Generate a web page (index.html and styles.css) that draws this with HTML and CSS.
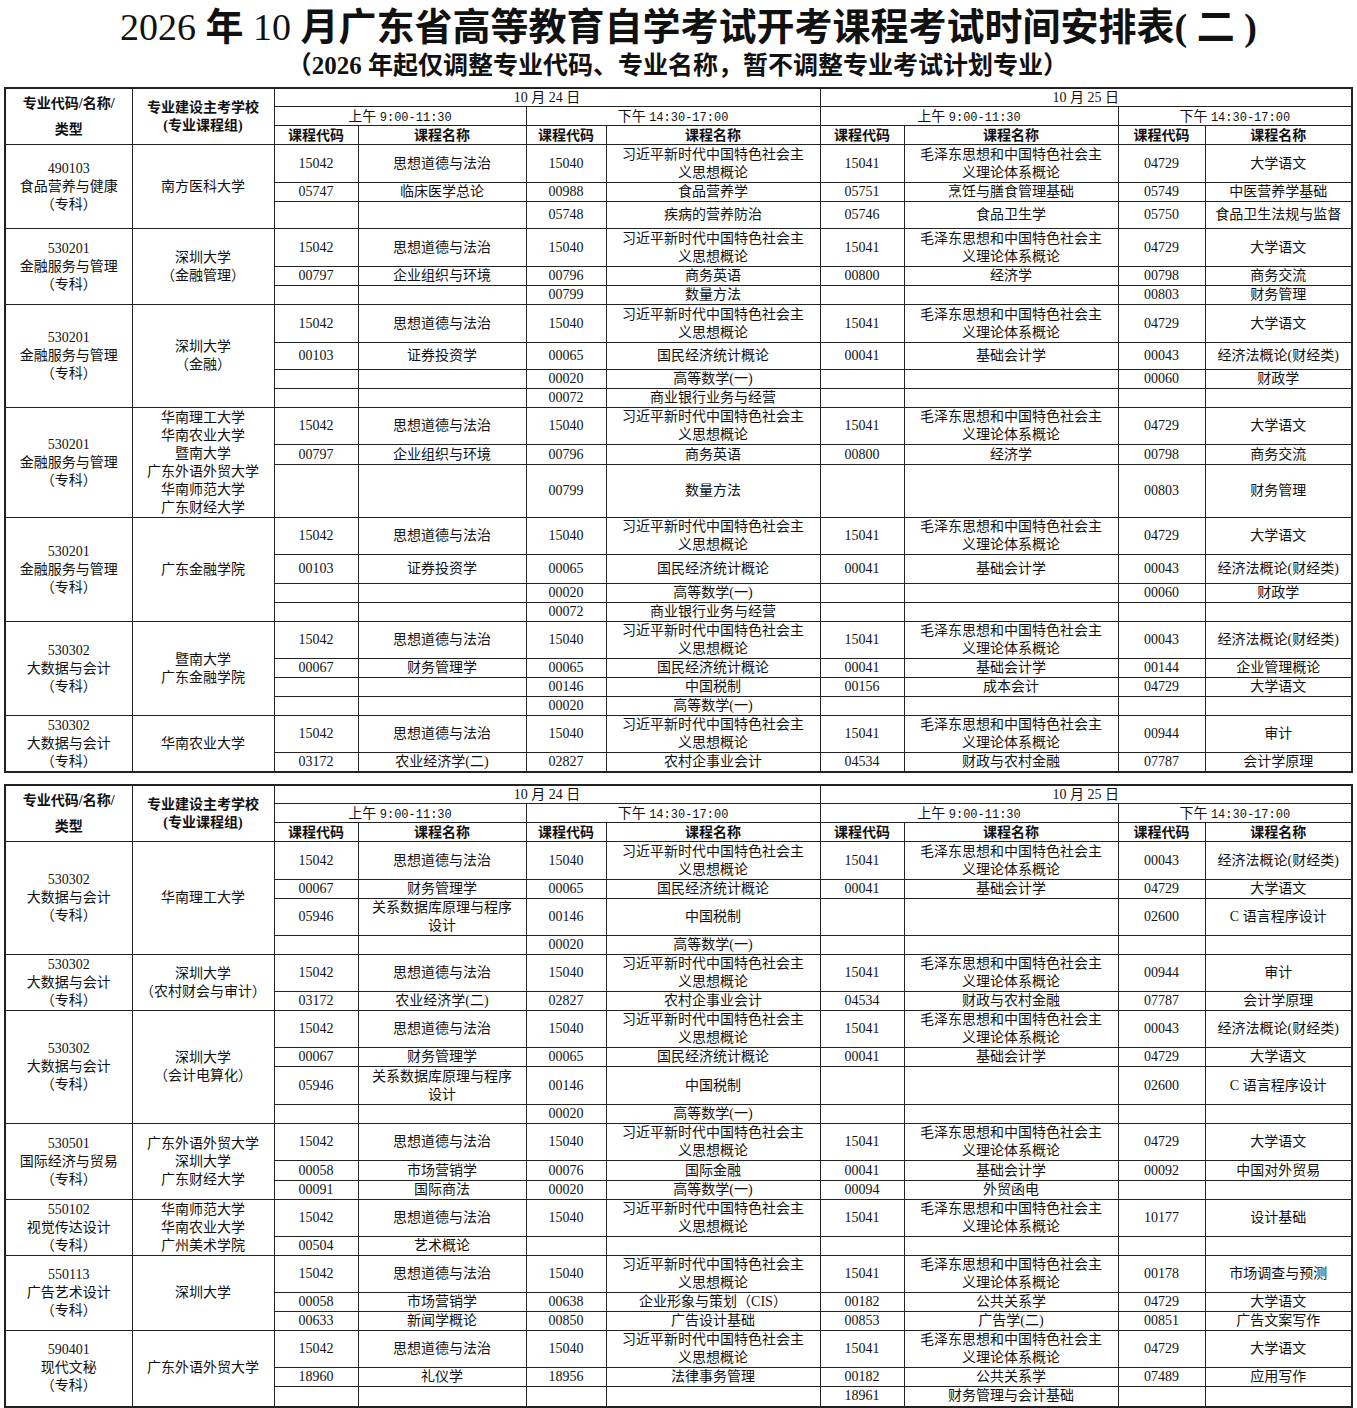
FILE: index.html
```html
<!DOCTYPE html>
<html lang="zh-CN">
<head>
<meta charset="utf-8">
<title>2026年10月广东省高等教育自学考试开考课程考试时间安排表(二)</title>
<link rel="stylesheet" href="styles.css">
</head>
<body>
<div class="page">
<h1 class="title"><span class="num">2026</span> 年 <span class="num">10</span> 月广东省高等教育自学考试开考课程考试时间安排表( 二 )</h1>
<div class="subtitle">（2026 年起仅调整专业代码、专业名称，暂不调整专业考试计划专业）</div>

<table class="sched">
<colgroup><col class="c1"><col class="c2"><col class="c3"><col class="c4"><col class="c5"><col class="c6"><col class="c7"><col class="c8"><col class="c9"><col class="c10"></colgroup>
<thead>
<tr class="h18"><td rowspan="3" class="hd hd1">专业代码/名称/<br>类型</td><td rowspan="3" class="hd hd2">专业建设主考学校<br>(专业课程组)</td><td colspan="4">10 月 24 日</td><td colspan="4">10 月 25 日</td></tr>
<tr class="h19"><td colspan="2">上午 <span class="tm">9:00-11:30</span></td><td colspan="2">下午 <span class="tm">14:30-17:00</span></td><td colspan="2">上午 <span class="tm">9:00-11:30</span></td><td colspan="2">下午 <span class="tm">14:30-17:00</span></td></tr>
<tr class="h19"><td class="hd">课程代码</td><td class="hd">课程名称</td><td class="hd">课程代码</td><td class="hd">课程名称</td><td class="hd">课程代码</td><td class="hd">课程名称</td><td class="hd">课程代码</td><td class="hd">课程名称</td></tr>
</thead>
<tbody>
<tr class="h38"><td rowspan="3">490103<br>食品营养与健康<br>（专科）</td><td rowspan="3">南方医科大学</td><td>15042</td><td>思想道德与法治</td><td>15040</td><td>习近平新时代中国特色社会主<br>义思想概论</td><td>15041</td><td>毛泽东思想和中国特色社会主<br>义理论体系概论</td><td>04729</td><td>大学语文</td></tr>
<tr class="h19"><td>05747</td><td>临床医学总论</td><td>00988</td><td>食品营养学</td><td>05751</td><td>烹饪与膳食管理基础</td><td>05749</td><td>中医营养学基础</td></tr>
<tr class="h27"><td></td><td></td><td>05748</td><td>疾病的营养防治</td><td>05746</td><td>食品卫生学</td><td>05750</td><td>食品卫生法规与监督</td></tr>

<tr class="h38"><td rowspan="3">530201<br>金融服务与管理<br>（专科）</td><td rowspan="3">深圳大学<br>（金融管理）</td><td>15042</td><td>思想道德与法治</td><td>15040</td><td>习近平新时代中国特色社会主<br>义思想概论</td><td>15041</td><td>毛泽东思想和中国特色社会主<br>义理论体系概论</td><td>04729</td><td>大学语文</td></tr>
<tr class="h19"><td>00797</td><td>企业组织与环境</td><td>00796</td><td>商务英语</td><td>00800</td><td>经济学</td><td>00798</td><td>商务交流</td></tr>
<tr class="h19"><td></td><td></td><td>00799</td><td>数量方法</td><td></td><td></td><td>00803</td><td>财务管理</td></tr>

<tr class="h38"><td rowspan="4">530201<br>金融服务与管理<br>（专科）</td><td rowspan="4">深圳大学<br>（金融）</td><td>15042</td><td>思想道德与法治</td><td>15040</td><td>习近平新时代中国特色社会主<br>义思想概论</td><td>15041</td><td>毛泽东思想和中国特色社会主<br>义理论体系概论</td><td>04729</td><td>大学语文</td></tr>
<tr class="h27"><td>00103</td><td>证券投资学</td><td>00065</td><td>国民经济统计概论</td><td>00041</td><td>基础会计学</td><td>00043</td><td>经济法概论(财经类)</td></tr>
<tr class="h19"><td></td><td></td><td>00020</td><td>高等数学(一)</td><td></td><td></td><td>00060</td><td>财政学</td></tr>
<tr class="h19"><td></td><td></td><td>00072</td><td>商业银行业务与经营</td><td></td><td></td><td></td><td></td></tr>

<tr class="h37"><td rowspan="3">530201<br>金融服务与管理<br>（专科）</td><td rowspan="3">华南理工大学<br>华南农业大学<br>暨南大学<br>广东外语外贸大学<br>华南师范大学<br>广东财经大学</td><td>15042</td><td>思想道德与法治</td><td>15040</td><td>习近平新时代中国特色社会主<br>义思想概论</td><td>15041</td><td>毛泽东思想和中国特色社会主<br>义理论体系概论</td><td>04729</td><td>大学语文</td></tr>
<tr class="h20"><td>00797</td><td>企业组织与环境</td><td>00796</td><td>商务英语</td><td>00800</td><td>经济学</td><td>00798</td><td>商务交流</td></tr>
<tr class="h53"><td></td><td></td><td>00799</td><td>数量方法</td><td></td><td></td><td>00803</td><td>财务管理</td></tr>

<tr class="h37"><td rowspan="4">530201<br>金融服务与管理<br>（专科）</td><td rowspan="4">广东金融学院</td><td>15042</td><td>思想道德与法治</td><td>15040</td><td>习近平新时代中国特色社会主<br>义思想概论</td><td>15041</td><td>毛泽东思想和中国特色社会主<br>义理论体系概论</td><td>04729</td><td>大学语文</td></tr>
<tr class="h29"><td>00103</td><td>证券投资学</td><td>00065</td><td>国民经济统计概论</td><td>00041</td><td>基础会计学</td><td>00043</td><td>经济法概论(财经类)</td></tr>
<tr class="h19"><td></td><td></td><td>00020</td><td>高等数学(一)</td><td></td><td></td><td>00060</td><td>财政学</td></tr>
<tr class="h19"><td></td><td></td><td>00072</td><td>商业银行业务与经营</td><td></td><td></td><td></td><td></td></tr>

<tr class="h37"><td rowspan="4">530302<br>大数据与会计<br>（专科）</td><td rowspan="4">暨南大学<br>广东金融学院</td><td>15042</td><td>思想道德与法治</td><td>15040</td><td>习近平新时代中国特色社会主<br>义思想概论</td><td>15041</td><td>毛泽东思想和中国特色社会主<br>义理论体系概论</td><td>00043</td><td>经济法概论(财经类)</td></tr>
<tr class="h19"><td>00067</td><td>财务管理学</td><td>00065</td><td>国民经济统计概论</td><td>00041</td><td>基础会计学</td><td>00144</td><td>企业管理概论</td></tr>
<tr class="h19"><td></td><td></td><td>00146</td><td>中国税制</td><td>00156</td><td>成本会计</td><td>04729</td><td>大学语文</td></tr>
<tr class="h19"><td></td><td></td><td>00020</td><td>高等数学(一)</td><td></td><td></td><td></td><td></td></tr>

<tr class="h37"><td rowspan="2">530302<br>大数据与会计<br>（专科）</td><td rowspan="2">华南农业大学</td><td>15042</td><td>思想道德与法治</td><td>15040</td><td>习近平新时代中国特色社会主<br>义思想概论</td><td>15041</td><td>毛泽东思想和中国特色社会主<br>义理论体系概论</td><td>00944</td><td>审计</td></tr>
<tr class="h19"><td>03172</td><td>农业经济学(二)</td><td>02827</td><td>农村企事业会计</td><td>04534</td><td>财政与农村金融</td><td>07787</td><td>会计学原理</td></tr>
</tbody>
</table>

<table class="sched second">
<colgroup><col class="c1"><col class="c2"><col class="c3"><col class="c4"><col class="c5"><col class="c6"><col class="c7"><col class="c8"><col class="c9"><col class="c10"></colgroup>
<thead>
<tr class="h18"><td rowspan="3" class="hd hd1">专业代码/名称/<br>类型</td><td rowspan="3" class="hd hd2">专业建设主考学校<br>(专业课程组)</td><td colspan="4">10 月 24 日</td><td colspan="4">10 月 25 日</td></tr>
<tr class="h19"><td colspan="2">上午 <span class="tm">9:00-11:30</span></td><td colspan="2">下午 <span class="tm">14:30-17:00</span></td><td colspan="2">上午 <span class="tm">9:00-11:30</span></td><td colspan="2">下午 <span class="tm">14:30-17:00</span></td></tr>
<tr class="h19"><td class="hd">课程代码</td><td class="hd">课程名称</td><td class="hd">课程代码</td><td class="hd">课程名称</td><td class="hd">课程代码</td><td class="hd">课程名称</td><td class="hd">课程代码</td><td class="hd">课程名称</td></tr>
</thead>
<tbody>
<tr class="h38"><td rowspan="4">530302<br>大数据与会计<br>（专科）</td><td rowspan="4">华南理工大学</td><td>15042</td><td>思想道德与法治</td><td>15040</td><td>习近平新时代中国特色社会主<br>义思想概论</td><td>15041</td><td>毛泽东思想和中国特色社会主<br>义理论体系概论</td><td>00043</td><td>经济法概论(财经类)</td></tr>
<tr class="h19"><td>00067</td><td>财务管理学</td><td>00065</td><td>国民经济统计概论</td><td>00041</td><td>基础会计学</td><td>04729</td><td>大学语文</td></tr>
<tr class="h37"><td>05946</td><td>关系数据库原理与程序<br>设计</td><td>00146</td><td>中国税制</td><td></td><td></td><td>02600</td><td>C 语言程序设计</td></tr>
<tr class="h19"><td></td><td></td><td>00020</td><td>高等数学(一)</td><td></td><td></td><td></td><td></td></tr>

<tr class="h37"><td rowspan="2">530302<br>大数据与会计<br>（专科）</td><td rowspan="2">深圳大学<br>（农村财会与审计）</td><td>15042</td><td>思想道德与法治</td><td>15040</td><td>习近平新时代中国特色社会主<br>义思想概论</td><td>15041</td><td>毛泽东思想和中国特色社会主<br>义理论体系概论</td><td>00944</td><td>审计</td></tr>
<tr class="h19"><td>03172</td><td>农业经济学(二)</td><td>02827</td><td>农村企事业会计</td><td>04534</td><td>财政与农村金融</td><td>07787</td><td>会计学原理</td></tr>

<tr class="h37"><td rowspan="4">530302<br>大数据与会计<br>（专科）</td><td rowspan="4">深圳大学<br>（会计电算化）</td><td>15042</td><td>思想道德与法治</td><td>15040</td><td>习近平新时代中国特色社会主<br>义思想概论</td><td>15041</td><td>毛泽东思想和中国特色社会主<br>义理论体系概论</td><td>00043</td><td>经济法概论(财经类)</td></tr>
<tr class="h19"><td>00067</td><td>财务管理学</td><td>00065</td><td>国民经济统计概论</td><td>00041</td><td>基础会计学</td><td>04729</td><td>大学语文</td></tr>
<tr class="h38"><td>05946</td><td>关系数据库原理与程序<br>设计</td><td>00146</td><td>中国税制</td><td></td><td></td><td>02600</td><td>C 语言程序设计</td></tr>
<tr class="h19"><td></td><td></td><td>00020</td><td>高等数学(一)</td><td></td><td></td><td></td><td></td></tr>

<tr class="h36"><td rowspan="3">530501<br>国际经济与贸易<br>（专科）</td><td rowspan="3">广东外语外贸大学<br>深圳大学<br>广东财经大学</td><td>15042</td><td>思想道德与法治</td><td>15040</td><td>习近平新时代中国特色社会主<br>义思想概论</td><td>15041</td><td>毛泽东思想和中国特色社会主<br>义理论体系概论</td><td>04729</td><td>大学语文</td></tr>
<tr class="h20"><td>00058</td><td>市场营销学</td><td>00076</td><td>国际金融</td><td>00041</td><td>基础会计学</td><td>00092</td><td>中国对外贸易</td></tr>
<tr class="h19"><td>00091</td><td>国际商法</td><td>00020</td><td>高等数学(一)</td><td>00094</td><td>外贸函电</td><td></td><td></td></tr>

<tr class="h37"><td rowspan="2">550102<br>视觉传达设计<br>（专科）</td><td rowspan="2">华南师范大学<br>华南农业大学<br>广州美术学院</td><td>15042</td><td>思想道德与法治</td><td>15040</td><td>习近平新时代中国特色社会主<br>义思想概论</td><td>15041</td><td>毛泽东思想和中国特色社会主<br>义理论体系概论</td><td>10177</td><td>设计基础</td></tr>
<tr class="h19"><td>00504</td><td>艺术概论</td><td></td><td></td><td></td><td></td><td></td><td></td></tr>

<tr class="h37"><td rowspan="3">550113<br>广告艺术设计<br>（专科）</td><td rowspan="3">深圳大学</td><td>15042</td><td>思想道德与法治</td><td>15040</td><td>习近平新时代中国特色社会主<br>义思想概论</td><td>15041</td><td>毛泽东思想和中国特色社会主<br>义理论体系概论</td><td>00178</td><td>市场调查与预测</td></tr>
<tr class="h19"><td>00058</td><td>市场营销学</td><td>00638</td><td>企业形象与策划（CIS）</td><td>00182</td><td>公共关系学</td><td>04729</td><td>大学语文</td></tr>
<tr class="h19"><td>00633</td><td>新闻学概论</td><td>00850</td><td>广告设计基础</td><td>00853</td><td>广告学(二)</td><td>00851</td><td>广告文案写作</td></tr>

<tr class="h37"><td rowspan="3">590401<br>现代文秘<br>（专科）</td><td rowspan="3">广东外语外贸大学</td><td>15042</td><td>思想道德与法治</td><td>15040</td><td>习近平新时代中国特色社会主<br>义思想概论</td><td>15041</td><td>毛泽东思想和中国特色社会主<br>义理论体系概论</td><td>04729</td><td>大学语文</td></tr>
<tr class="h19"><td>18960</td><td>礼仪学</td><td>18956</td><td>法律事务管理</td><td>00182</td><td>公共关系学</td><td>07489</td><td>应用写作</td></tr>
<tr class="h20"><td></td><td></td><td></td><td></td><td>18961</td><td>财务管理与会计基础</td><td></td><td></td></tr>
</tbody>
</table>
</div>
</body>
</html>
```

FILE: styles.css
```css
html, body {
  margin: 0;
  padding: 0;
  background: #fff;
}

body {
  font-family: "Liberation Serif", "Noto Sans CJK SC", serif;
  color: #111;
}

.page {
  width: 1347px;
  padding: 0 0 0 4px;
}

.title {
  margin: 0;
  padding: 3px 0 0 22px;
  height: 48px;
  line-height: 48px;
  font-size: 38px;
  font-weight: 700;
  text-align: center;
  white-space: nowrap;
}

.title .num {
  font-weight: 400;
}

.subtitle {
  height: 30px;
  line-height: 30px;
  font-size: 25px;
  font-weight: 700;
  text-align: center;
  margin-bottom: 6px;
  white-space: nowrap;
}

.sched {
  width: 1347px;
  table-layout: fixed;
  border-collapse: collapse;
  border: 2px solid #222;
  font-size: 14px;
  line-height: 18px;
}

.sched.second {
  margin-top: 11px;
}

.sched td {
  border: 1px solid #222;
  padding: 0 2px;
  text-align: center;
  vertical-align: middle;
  white-space: nowrap;
  overflow: hidden;
}

.sched thead td {
  line-height: 17px;
}

.c1 { width: 127px; }
.c2 { width: 142px; }
.c3 { width: 84px; }
.c4 { width: 168px; }
.c5 { width: 80px; }
.c6 { width: 214px; }
.c7 { width: 84px; }
.c8 { width: 214px; }
.c9 { width: 87px; }
.c10 { width: 147px; }

.hd {
  font-weight: 700;
}

.sched thead td.hd1 {
  line-height: 26px;
}

.sched thead td.hd2 {
  line-height: 18px;
}

.tm {
  font-family: "Liberation Mono", monospace;
  font-size: 12px;
  line-height: 1;
}

.h18 { height: 18px; }
.h19 { height: 19px; }
.h20 { height: 20px; }
.h27 { height: 27px; }
.h29 { height: 29px; }
.h36 { height: 36px; }
.h37 { height: 37px; }
.h38 { height: 38px; }
.h53 { height: 53px; }
```
